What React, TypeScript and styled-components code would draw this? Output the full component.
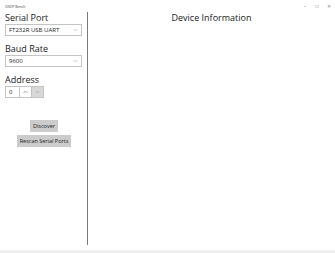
import styled, { createGlobalStyle } from "styled-components";

const Global = createGlobalStyle`
  html, body {
    margin: 0;
    padding: 0;
    background: #ffffff;
  }
  body {
    font-family: "Open Sans", "Noto Sans", sans-serif;
    color: #1a1a1a;
  }
`;

const Window = styled.div`
  width: 335px;
  height: 253px;
  display: flex;
  flex-direction: column;
  overflow: hidden;
  background: #fff;
`;

const TitleBar = styled.div`
  height: 12px;
  display: flex;
  align-items: center;
  justify-content: space-between;
  padding: 0 0 0 5px;
`;

const TitleText = styled.span`
  font-size: 3.5px;
  color: #444;
`;

const Controls = styled.div`
  display: flex;
  align-items: center;
  height: 12px;
`;

const ControlButton = styled.div`
  width: 12px;
  height: 12px;
  display: flex;
  align-items: center;
  justify-content: center;
  color: #888;
  font-size: 5px;
`;

const Body = styled.div`
  flex: 1;
  display: flex;
  padding-bottom: 5px;
`;

const Sidebar = styled.div`
  width: 88px;
  border-right: 1.5px solid #7a7a7a;
  display: flex;
  flex-direction: column;
  padding: 0 0 0 5px;
  box-sizing: border-box;
`;

const Label = styled.div`
  font-size: 9px;
  line-height: 11px;
  margin: 0 0 1px;
  color: #1a1a1a;
`;

const Combo = styled.div`
  width: 77px;
  height: 12px;
  border: 1px solid #c4c4c4;
  box-sizing: border-box;
  display: flex;
  align-items: center;
  justify-content: space-between;
  padding: 0 3px;
  font-size: 6px;
  margin-bottom: 7px;
  color: #222;
`;

const Chevron = styled.svg`
  width: 5px;
  height: 4px;
`;

const NumberRow = styled.div`
  display: flex;
  height: 12px;
`;

const NumberBox = styled.div`
  width: 15px;
  border: 1px solid #c4c4c4;
  box-sizing: border-box;
  font-size: 6px;
  display: flex;
  align-items: center;
  padding-left: 3px;
`;

const Spin = styled.div<{ $disabled?: boolean }>`
  width: 12px;
  border: 1px solid #c4c4c4;
  border-left: none;
  box-sizing: border-box;
  background: ${({ $disabled }) => ($disabled ? "#d8d8d8" : "#fff")};
  display: flex;
  align-items: center;
  justify-content: center;
`;

const Buttons = styled.div`
  display: flex;
  flex-direction: column;
  align-items: center;
  gap: 3px;
  margin-top: 22px;
  width: 78px;
`;

const Button = styled.div`
  background: #cccccc;
  font-size: 5.5px;
  padding: 0 3px;
  height: 12px;
  display: flex;
  align-items: center;
  color: #222;
`;

const Main = styled.div`
  flex: 1;
  display: flex;
  justify-content: center;
`;

const Heading = styled.div`
  font-size: 9px;
  line-height: 11px;
  margin-top: 0;
`;

const BottomBar = styled.div`
  height: 3px;
  background: #efefef;
`;

const Down = ({ color }: { color: string }) => (
  <Chevron viewBox="0 0 10 6">
    <path d="M1 1 L5 5 L9 1" fill="none" stroke={color} strokeWidth="1" />
  </Chevron>
);

const Up = ({ color }: { color: string }) => (
  <Chevron viewBox="0 0 10 6">
    <path d="M1 5 L5 1 L9 5" fill="none" stroke={color} strokeWidth="1" />
  </Chevron>
);

export default function App() {
  return (
    <>
      <Global />
      <Window>
        <TitleBar>
          <TitleText>OSDP Bench</TitleText>
          <Controls>
            <ControlButton>–</ControlButton>
            <ControlButton>□</ControlButton>
            <ControlButton>✕</ControlButton>
          </Controls>
        </TitleBar>
        <Body>
          <Sidebar>
            <Label>Serial Port</Label>
            <Combo>
              FT232R USB UART
              <Down color="#999" />
            </Combo>
            <Label>Baud Rate</Label>
            <Combo>
              9600
              <Down color="#999" />
            </Combo>
            <Label>Address</Label>
            <NumberRow>
              <NumberBox>0</NumberBox>
              <Spin>
                <Up color="#444" />
              </Spin>
              <Spin $disabled>
                <Down color="#999" />
              </Spin>
            </NumberRow>
            <Buttons>
              <Button>Discover</Button>
              <Button>Rescan Serial Ports</Button>
            </Buttons>
          </Sidebar>
          <Main>
            <Heading>Device Information</Heading>
          </Main>
        </Body>
        <BottomBar />
      </Window>
    </>
  );
}
